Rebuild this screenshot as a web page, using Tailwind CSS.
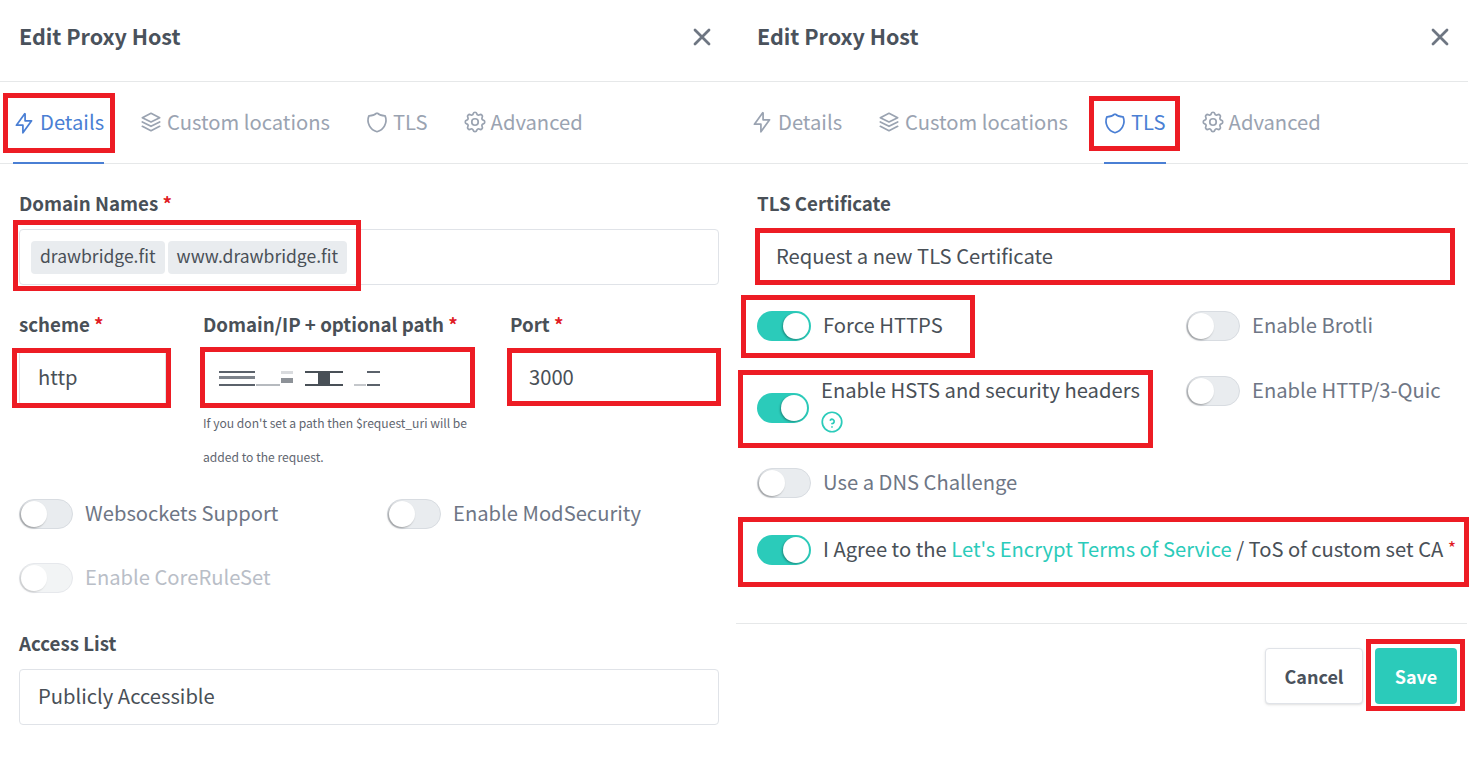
<!DOCTYPE html>
<html lang="en">
<head>
  <meta charset="UTF-8" />
  <title>Edit Proxy Host</title>
  <script src="https://cdn.jsdelivr.net/npm/@tailwindcss/browser@4"></script>
</head>
<body class="bg-white h-[758px] w-[1482px] overflow-hidden relative font-['Noto_Sans_CJK_SC','Noto_Sans',sans-serif] text-[#495057]">

  <div class="flex">
    <!-- details panel -->
    <section class="w-[738px] shrink-0">
      <header class="h-[82px] border-b border-[#e6e8e9] flex items-center justify-between pl-[19px] pr-[22px] pb-[8px]">
        <h2 class="text-[21.500px] font-bold text-[#4a525c]">Edit Proxy Host</h2>
        <svg class="w-[28px] h-[28px] text-[#6e7682]" viewBox="0 0 24 24" fill="none" stroke="currentColor" stroke-width="2.400" stroke-linecap="round"><path d="M18 6 6 18M6 6l12 12"/></svg>
      </header>
      <nav class="h-[82px] border-b border-[#e6e8e9] flex items-center pl-[11px] text-[20.200px] text-[#9aa3b1]">
        <a class="relative flex items-center gap-[3px] h-full text-[#4a7fd4] mr-[34px]">
          <svg class="w-[26px] h-[26px]" viewBox="0 0 24 24" fill="none" stroke="currentColor" stroke-width="1.600" stroke-linejoin="round"><path d="M13 3v7h6l-8 11v-7H5l8-11"/></svg>
          Details
          <span class="absolute left-[2px] right-0 -bottom-px h-[2px] bg-[#4a7fd4]"></span>
        </a>
        <a class="flex items-center gap-[3px] mr-[34px]">
          <svg class="w-[26px] h-[26px]" viewBox="0 0 24 24" fill="none" stroke="currentColor" stroke-width="1.600" stroke-linejoin="round" stroke-linecap="round"><path d="m12 4-8 4 8 4 8-4-8-4"/><path d="m4 12 8 4 8-4"/><path d="m4 16 8 4 8-4"/></svg>
          Custom locations
        </a>
        <a class="flex items-center gap-[3px] mr-[34px]">
          <svg class="w-[26px] h-[26px]" viewBox="0 0 24 24" fill="none" stroke="currentColor" stroke-width="1.600" stroke-linejoin="round"><path d="M12 3.500a11 11 0 0 0 7.500 2.800A11 11 0 0 1 12 21 11 11 0 0 1 4.500 6.300 11 11 0 0 0 12 3.500"/></svg>
          TLS
        </a>
        <a class="flex items-center gap-[3px]">
          <svg class="w-[26px] h-[26px]" viewBox="0 0 24 24" fill="none" stroke="currentColor" stroke-width="1.600" stroke-linejoin="round"><path d="M10.325 4.317c.426-1.756 2.924-1.756 3.350 0a1.724 1.724 0 0 0 2.573 1.066c1.543-.94 3.310.826 2.370 2.370a1.724 1.724 0 0 0 1.065 2.572c1.756.426 1.756 2.924 0 3.350a1.724 1.724 0 0 0-1.066 2.573c.94 1.543-.826 3.310-2.370 2.370a1.724 1.724 0 0 0-2.572 1.065c-.426 1.756-2.924 1.756-3.350 0a1.724 1.724 0 0 0-2.573-1.066c-1.543.94-3.310-.826-2.370-2.370a1.724 1.724 0 0 0-1.065-2.572c-1.756-.426-1.756-2.924 0-3.350a1.724 1.724 0 0 0 1.066-2.573c-.94-1.543.826-3.310 2.370-2.370 1 .608 2.296.07 2.572-1.065"/><circle cx="12" cy="12" r="3"/></svg>
          Advanced
        </a>
      </nav>

      <div class="px-[19px] pt-[26px]">
        <label class="block text-[18.700px] leading-[26px] font-bold mb-[13px]">Domain Names <span class="text-[#e01b24]">*</span></label>
        <div class="h-[56px] border border-[#e0e3e8] rounded-[4px] flex items-center gap-[3px] pl-[11px] text-[17.500px]">
          <span class="h-[33px] leading-[29px] px-[9px] bg-[#e9ecef] rounded-[4px]">drawbridge.fit</span>
          <span class="h-[33px] leading-[29px] px-[9px] bg-[#e9ecef] rounded-[4px]">www.drawbridge.fit</span>
        </div>

        <div class="flex gap-[37px] mt-[26px]">
          <div class="w-[147px]">
            <label class="block text-[18.700px] leading-[26px] font-bold mb-[13px]">scheme <span class="text-[#e01b24]">*</span></label>
            <div class="h-[56px] border border-[#e0e3e8] rounded-[4px] flex items-center pl-[18px] pb-[2px] text-[20.200px]">http</div>
          </div>
          <div class="w-[270px]">
            <label class="block text-[18.700px] leading-[26px] font-bold mb-[13px]">Domain/IP + optional path <span class="text-[#e01b24]">*</span></label>
            <div class="h-[56px] border border-[#e0e3e8] rounded-[4px] flex items-center pl-[15px] gap-[1px]" aria-hidden="true">
              <i class="w-[36px] h-[15px] border-y-2 border-[#5b626b] bg-[linear-gradient(#fff_30%,#7d838b_30%,#7d838b_55%,#fff_55%)]"></i>
              <i class="w-[24px] h-[2px] mt-[13px] bg-[#b6babf]"></i>
              <i class="w-[12px] h-[15px] bg-[linear-gradient(#d9dbde_20%,#fff_20%,#fff_45%,#8d9298_45%,#8d9298_80%,#fff_80%)] mr-[11px]"></i>
              <i class="w-[38px] h-[15px] border-y-2 border-[#495057] bg-[linear-gradient(90deg,#fff_35%,#495057_35%,#495057_65%,#fff_65%)]"></i>
              <i class="w-[12px] h-[2px] mt-[13px] ml-[10px] bg-[#c4c7cb]"></i>
              <i class="w-[13px] h-[15px] border-y-2 border-[#5b626b]"></i>
            </div>
            <p class="text-[12.100px] leading-[34px] text-[#5f6670]">If you don't set a path then $request_uri will be added to the request.</p>
          </div>
          <div class="flex-1">
            <label class="block text-[18.700px] leading-[26px] font-bold mb-[13px]">Port <span class="text-[#e01b24]">*</span></label>
            <div class="h-[56px] border border-[#e0e3e8] rounded-[4px] flex items-center pl-[18px] pb-[2px] text-[20.200px]">3000</div>
          </div>
        </div>

        <div class="grid grid-cols-[368px_1fr] mt-[25px] text-[20.200px] text-[#6e7685]">
          <div class="flex items-center gap-[12px] h-[30px]">
            <span class="relative shrink-0 w-[54px] h-[30px] rounded-full bg-[#e9ecef] border border-[#d8dce1]"><span class="absolute left-[1px] top-[1px] w-[26px] h-[26px] rounded-full bg-white shadow-[-1px_1px_2px_rgba(0,0,0,.35)]"></span></span>
            <span class="mb-[2px]">Websockets Support</span>
          </div>
          <div class="flex items-center gap-[12px] h-[30px]">
            <span class="relative shrink-0 w-[54px] h-[30px] rounded-full bg-[#e9ecef] border border-[#d8dce1]"><span class="absolute left-[1px] top-[1px] w-[26px] h-[26px] rounded-full bg-white shadow-[-1px_1px_2px_rgba(0,0,0,.35)]"></span></span>
            <span class="mb-[2px]">Enable ModSecurity</span>
          </div>
        </div>
        <div class="flex items-center gap-[12px] h-[30px] mt-[34px] text-[20.200px] text-[#b9bec7]">
          <span class="relative shrink-0 w-[54px] h-[30px] rounded-full bg-[#f2f4f5] border border-[#e6e8ec]"><span class="absolute left-[1px] top-[1px] w-[26px] h-[26px] rounded-full bg-white shadow-[-1px_1px_2px_rgba(0,0,0,.18)]"></span></span>
          <span class="mb-[2px]">Enable CoreRuleSet</span>
        </div>

        <label class="block text-[18.700px] leading-[26px] font-bold mt-[37px] mb-[13px]">Access List</label>
        <div class="h-[56px] border border-[#e0e3e8] rounded-[4px] flex items-center pl-[18px] pb-[2px] text-[20.200px]">Publicly Accessible</div>
      </div>
    </section>

    <!-- tls panel -->
    <section class="w-[730px] shrink-0">
      <header class="h-[82px] border-b border-[#e6e8e9] flex items-center justify-between pl-[19px] pr-[14px] pb-[8px]">
        <h2 class="text-[21.500px] font-bold text-[#4a525c]">Edit Proxy Host</h2>
        <svg class="w-[28px] h-[28px] text-[#6e7682]" viewBox="0 0 24 24" fill="none" stroke="currentColor" stroke-width="2.400" stroke-linecap="round"><path d="M18 6 6 18M6 6l12 12"/></svg>
      </header>
      <nav class="h-[82px] border-b border-[#e6e8e9] flex items-center pl-[11px] text-[20.200px] text-[#9aa3b1]">
        <a class="flex items-center gap-[3px] mr-[34px]">
          <svg class="w-[26px] h-[26px]" viewBox="0 0 24 24" fill="none" stroke="currentColor" stroke-width="1.600" stroke-linejoin="round"><path d="M13 3v7h6l-8 11v-7H5l8-11"/></svg>
          Details
        </a>
        <a class="flex items-center gap-[3px] mr-[34px]">
          <svg class="w-[26px] h-[26px]" viewBox="0 0 24 24" fill="none" stroke="currentColor" stroke-width="1.600" stroke-linejoin="round" stroke-linecap="round"><path d="m12 4-8 4 8 4 8-4-8-4"/><path d="m4 12 8 4 8-4"/><path d="m4 16 8 4 8-4"/></svg>
          Custom locations
        </a>
        <a class="relative flex items-center gap-[3px] h-full text-[#4a7fd4] mr-[34px]">
          <svg class="w-[26px] h-[26px]" viewBox="0 0 24 24" fill="none" stroke="currentColor" stroke-width="1.600" stroke-linejoin="round"><path d="M12 3.500a11 11 0 0 0 7.500 2.800A11 11 0 0 1 12 21 11 11 0 0 1 4.500 6.300 11 11 0 0 0 12 3.500"/></svg>
          TLS
          <span class="absolute left-[2px] right-0 -bottom-px h-[2px] bg-[#4a7fd4]"></span>
        </a>
        <a class="flex items-center gap-[3px]">
          <svg class="w-[26px] h-[26px]" viewBox="0 0 24 24" fill="none" stroke="currentColor" stroke-width="1.600" stroke-linejoin="round"><path d="M10.325 4.317c.426-1.756 2.924-1.756 3.350 0a1.724 1.724 0 0 0 2.573 1.066c1.543-.94 3.310.826 2.370 2.370a1.724 1.724 0 0 0 1.065 2.572c1.756.426 1.756 2.924 0 3.350a1.724 1.724 0 0 0-1.066 2.573c.94 1.543-.826 3.310-2.370 2.370a1.724 1.724 0 0 0-2.572 1.065c-.426 1.756-2.924 1.756-3.350 0a1.724 1.724 0 0 0-2.573-1.066c-1.543.94-3.310-.826-2.370-2.370a1.724 1.724 0 0 0-1.065-2.572c-1.756-.426-1.756-2.924 0-3.350a1.724 1.724 0 0 0 1.066-2.573c-.94-1.543.826-3.310 2.370-2.370 1 .608 2.296.07 2.572-1.065"/><circle cx="12" cy="12" r="3"/></svg>
          Advanced
        </a>
      </nav>

      <div class="px-[19px] pt-[26px]">
        <label class="block text-[18.700px] leading-[26px] font-bold mb-[13px]">TLS Certificate</label>
        <div class="h-[56px] flex items-center pl-[19px] pb-[2px] text-[20.200px]">Request a new TLS Certificate</div>

        <div class="grid grid-cols-[429px_1fr] mt-[26px] text-[20.200px] text-[#6e7685]">
          <div class="flex items-center gap-[12px] h-[30px] text-[#495057]">
            <span class="relative shrink-0 w-[54px] h-[30px] rounded-full bg-[#2bcbba]"><span class="absolute right-[2px] top-[2px] w-[26px] h-[26px] rounded-full bg-white shadow-[-1px_1px_2px_rgba(0,0,0,.3)]"></span></span>
            <span class="mb-[2px]">Force HTTPS</span>
          </div>
          <div class="flex items-center gap-[12px] h-[30px]">
            <span class="relative shrink-0 w-[54px] h-[30px] rounded-full bg-[#e9ecef] border border-[#d8dce1]"><span class="absolute left-[1px] top-[1px] w-[26px] h-[26px] rounded-full bg-white shadow-[-1px_1px_2px_rgba(0,0,0,.35)]"></span></span>
            <span class="mb-[2px]">Enable Brotli</span>
          </div>
        </div>
        <div class="grid grid-cols-[429px_1fr] mt-[35px] text-[20.200px] text-[#6e7685]">
          <div class="flex gap-[12px] h-[64px] text-[#495057]">
            <span class="relative shrink-0 self-center w-[52px] h-[30px] rounded-full bg-[#2bcbba]"><span class="absolute right-[2px] top-[2px] w-[26px] h-[26px] rounded-full bg-white shadow-[-1px_1px_2px_rgba(0,0,0,.3)]"></span></span>
            <div class="leading-[30px] mt-[-1px]">
              Enable HSTS and security headers
              <svg class="w-[26px] h-[26px] mt-[4px] ml-[-2px] text-[#2bcbba] block" viewBox="0 0 24 24" fill="none" stroke="currentColor" stroke-width="1.600" stroke-linecap="round" stroke-linejoin="round"><circle cx="12" cy="12" r="9"/><path d="M12 16.500v.01"/><path d="M12 13.500a2 2 0 0 0 .914-3.782 1.980 1.980 0 0 0-2.414.483"/></svg>
            </div>
          </div>
          <div class="flex items-center gap-[12px] h-[30px]">
            <span class="relative shrink-0 w-[54px] h-[30px] rounded-full bg-[#e9ecef] border border-[#d8dce1]"><span class="absolute left-[1px] top-[1px] w-[26px] h-[26px] rounded-full bg-white shadow-[-1px_1px_2px_rgba(0,0,0,.35)]"></span></span>
            <span class="mb-[2px]">Enable HTTP/3-Quic</span>
          </div>
        </div>
        <div class="flex items-center gap-[12px] h-[30px] mt-[28px] text-[20.200px] text-[#6e7685]">
          <span class="relative shrink-0 w-[54px] h-[30px] rounded-full bg-[#e9ecef] border border-[#d8dce1]"><span class="absolute left-[1px] top-[1px] w-[26px] h-[26px] rounded-full bg-white shadow-[-1px_1px_2px_rgba(0,0,0,.35)]"></span></span>
          <span class="mb-[2px]">Use a DNS Challenge</span>
        </div>
        <div class="flex items-center gap-[12px] h-[30px] mt-[37px] text-[20.200px] whitespace-nowrap">
          <span class="relative shrink-0 w-[54px] h-[30px] rounded-full bg-[#2bcbba]"><span class="absolute right-[2px] top-[2px] w-[26px] h-[26px] rounded-full bg-white shadow-[-1px_1px_2px_rgba(0,0,0,.3)]"></span></span>
          <span class="mb-[2px]">I Agree to the <a class="text-[#2bcbba]">Let's Encrypt Terms of Service</a> / ToS of custom set CA <span class="text-[#e01b24] text-[18px] align-top">*</span></span>
        </div>
      </div>

      <footer class="ml-[-2px] w-[731px] mt-[58px] border-t border-[#e6e8e9] pt-[24px] pr-[10px] flex justify-end gap-[12px]">
        <button class="w-[98px] h-[56px] border border-[#e0e3e8] rounded-[4px] bg-white shadow-sm text-[18px] font-bold text-[#4a525c]">Cancel</button>
        <button class="w-[82px] h-[56px] rounded-[4px] bg-[#2bcbba] text-[18px] font-bold text-white">Save</button>
      </footer>
    </section>
  </div>

  <!-- red annotation boxes drawn over the screenshot -->
  <div class="absolute left-[3px] top-[93px] w-[112px] h-[60px] border-[5px] border-[#ed1c24]"></div>
  <div class="absolute left-[13px] top-[220px] w-[348px] h-[71px] border-[5px] border-[#ed1c24]"></div>
  <div class="absolute left-[12px] top-[348px] w-[159px] h-[60px] border-[5px] border-[#ed1c24]"></div>
  <div class="absolute left-[200px] top-[347px] w-[275px] h-[61px] border-[5px] border-[#ed1c24]"></div>
  <div class="absolute left-[507px] top-[348px] w-[214px] h-[58px] border-[5px] border-[#ed1c24]"></div>
  <div class="absolute left-[1089px] top-[96px] w-[91px] h-[55px] border-[5px] border-[#ed1c24]"></div>
  <div class="absolute left-[755px] top-[228px] w-[700px] h-[57px] border-[5px] border-[#ed1c24]"></div>
  <div class="absolute left-[741px] top-[295px] w-[234px] h-[63px] border-[5px] border-[#ed1c24]"></div>
  <div class="absolute left-[738px] top-[370px] w-[415px] h-[78px] border-[5px] border-[#ed1c24]"></div>
  <div class="absolute left-[738px] top-[517px] w-[731px] h-[70px] border-[5px] border-[#ed1c24]"></div>
  <div class="absolute left-[1366px] top-[639px] w-[99px] h-[72px] border-[5px] border-[#ed1c24]"></div>

</body>
</html>
